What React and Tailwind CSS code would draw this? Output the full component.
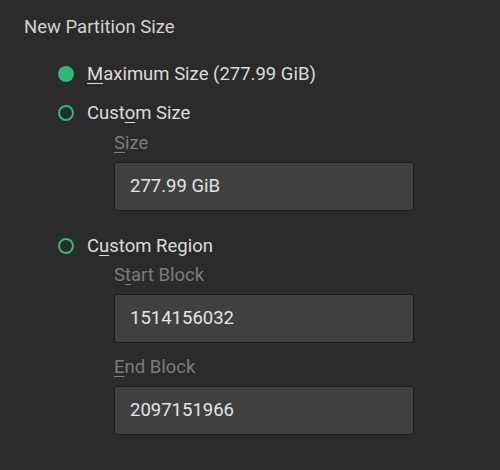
import React from "react";

function Radio({ checked, children }) {
  return (
    <div className="flex h-6 items-center">
      <div className="flex w-[63px] justify-end pr-[13px]">
        {checked ? (
          <div className="h-4 w-4 rounded-full bg-[#2fb873]" />
        ) : (
          <div className="h-4 w-4 rounded-full border-2 border-[#2fb873]" />
        )}
      </div>
      <div className="text-[18.5px] leading-6 text-[#dcdcdc]">{children}</div>
    </div>
  );
}

function Field({ label, value, className = "" }) {
  return (
    <div className={"ml-[90px] flex flex-col " + className}>
      <div className="h-6 text-[18.5px] leading-6 text-[#7c7c7c]">{label}</div>
      <div className="mt-[7px] flex h-[49px] w-[300px] items-center rounded-[3px] border border-[#1c1c1c] bg-[#404040] px-[15px] text-[18.5px] text-[#e4e4e4]">
        {value}
      </div>
    </div>
  );
}

const U = ({ children }) => (
  <span className="underline decoration-1 underline-offset-[3px]">{children}</span>
);

export default function App() {
  return (
    <div
      className="h-[470px] w-[500px] bg-[#2b2b2b] pl-[24px] pt-[15px]"
      style={{ fontFamily: "Roboto, 'Noto Sans', sans-serif" }}
    >
      <div className="h-6 text-[18.5px] leading-6 text-[#d2d2d2]">New Partition Size</div>
      <div className="mt-[23px]">
        <Radio checked>
          <U>M</U>aximum Size (277.99 GiB)
        </Radio>
      </div>
      <div className="mt-[15px]">
        <Radio>
          Cust<U>o</U>m Size
        </Radio>
      </div>
      <Field
        className="mt-[6px]"
        label={
          <>
            <U>S</U>ize
          </>
        }
        value="277.99 GiB"
      />
      <div className="mt-[23px]">
        <Radio>
          C<U>u</U>stom Region
        </Radio>
      </div>
      <Field
        className="mt-[5px]"
        label={
          <>
            S<U>t</U>art Block
          </>
        }
        value="1514156032"
      />
      <Field
        className="mt-[12px]"
        label={
          <>
            <U>E</U>nd Block
          </>
        }
        value="2097151966"
      />
    </div>
  );
}
